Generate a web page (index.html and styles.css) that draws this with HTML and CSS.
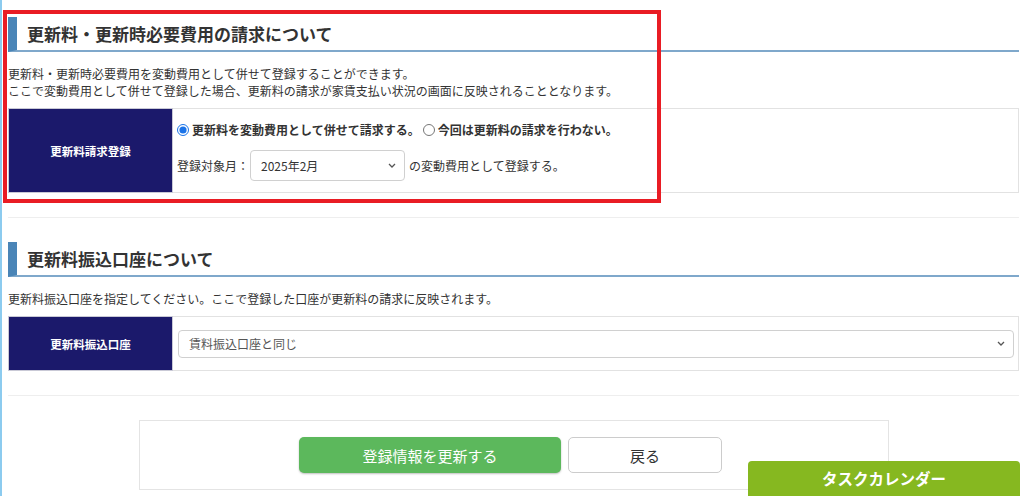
FILE: index.html
```html
<!DOCTYPE html>
<html lang="ja">
<head>
    <meta charset="UTF-8">
    <title>更新料の請求設定</title>
    <link rel="stylesheet" href="styles.css">
</head>
<body>
<div class="page">
    <section class="block">
        <h2 class="sec-title">更新料・更新時必要費用の請求について</h2>
        <p class="sec-desc">
            更新料・更新時必要費用を変動費用として併せて登録することができます。<br>
            ここで変動費用として併せて登録した場合、更新料の請求が家賃支払い状況の画面に反映されることとなります。
        </p>
        <table class="form-table">
            <tr class="row-tall">
                <th>更新料請求登録</th>
                <td>
                    <div class="radio-line">
                        <label class="radio"><input type="radio" name="claim" checked>更新料を変動費用として併せて請求する。</label>
                        <label class="radio"><input type="radio" name="claim">今回は更新料の請求を行わない。</label>
                    </div>
                    <div class="month-line">
                        <span>登録対象月：</span>
                        <select class="sel sel-month">
                            <option>2025年2月</option>
                        </select>
                        <span>の変動費用として登録する。</span>
                    </div>
                </td>
            </tr>
        </table>
    </section>

    <hr class="sep">

    <section class="block">
        <h2 class="sec-title">更新料振込口座について</h2>
        <p class="sec-desc">更新料振込口座を指定してください。ここで登録した口座が更新料の請求に反映されます。</p>
        <table class="form-table">
            <tr class="row-short">
                <th>更新料振込口座</th>
                <td>
                    <select class="sel sel-wide">
                        <option>賃料振込口座と同じ</option>
                    </select>
                </td>
            </tr>
        </table>
    </section>

    <hr class="sep">

    <div class="actions">
        <button type="button" class="btn btn-primary">登録情報を更新する</button>
        <button type="button" class="btn btn-back">戻る</button>
    </div>
</div>

<!-- 注釈の赤枠 -->
<div class="annot"></div>

<a href="#" class="task-tab">タスクカレンダー</a>
</body>
</html>
```

FILE: styles.css
```css
:root {
    --navy: #1b196b;
    --bar-blue: #4a85b7;
    --line-blue: #7fa8cb;
    --border: #e2e2e2;
    --text: #333;
    --green: #5cb85c;
    --lime: #86b820;
}

* {
    margin: 0;
    padding: 0;
    box-sizing: border-box;
}

body {
    font-family: "Noto Sans CJK JP", "Noto Sans", sans-serif;
    color: var(--text);
    background: #fff;
    overflow: hidden;
}

.page {
    border-left: 2px solid #8ccbef;
    min-height: 496px;
    padding: 17px 5px 0 6px;
}

/* 見出し */
.sec-title {
    height: 35px;
    line-height: 33px;
    font-size: 17px;
    font-weight: 700;
    color: #333;
    border-left: 9px solid var(--bar-blue);
    border-bottom: 2px solid var(--line-blue);
    padding-left: 10px;
}

.sec-desc {
    font-size: 12px;
    line-height: 17px;
    margin: 13px 0 9px;
    color: #333;
}

/* フォームテーブル */
.form-table {
    width: 100%;
    border-collapse: collapse;
}

.form-table th {
    width: 164px;
    background: var(--navy);
    color: #fff;
    font-size: 11.5px;
    font-weight: 700;
    text-align: center;
    border: 1px solid #c9c9d6;
}

.form-table td {
    border: 1px solid var(--border);
    font-size: 12px;
    padding: 0 4px;
}

.row-tall {
    height: 84px;
}

.row-short {
    height: 54px;
}

.radio-line {
    display: flex;
    gap: 3px;
    font-weight: 700;
    margin-top: 1px;
}

.radio {
    display: flex;
    align-items: center;
    gap: 2px;
}

.radio input {
    width: 12px;
    height: 12px;
    margin: 0 1px 0 0;
    accent-color: #1a73e8;
}

.month-line {
    display: flex;
    align-items: center;
    gap: 1px;
    margin-top: 12px;
}

.month-line span:last-child {
    margin-left: 3px;
}

.sel {
    appearance: none;
    -webkit-appearance: none;
    font-family: inherit;
    font-size: 12px;
    color: #333;
    background: #fff url("data:image/svg+xml,%3Csvg xmlns='http://www.w3.org/2000/svg' width='8' height='5' viewBox='0 0 8 5'%3E%3Cpath d='M1 1l3 3 3-3' fill='none' stroke='%23555' stroke-width='1.3'/%3E%3C/svg%3E") no-repeat right 8px center;
    border: 1px solid #d0d0d0;
    border-radius: 4px;
    padding: 0 24px 0 10px;
    outline: none;
}

.sel-month {
    width: 155px;
    height: 31px;
}

.sel-wide {
    display: block;
    width: 836px;
    height: 28px;
    margin-left: 1px;
    color: #555;
}

/* 区切り線 */
.sep {
    border: none;
    border-top: 1px solid #eee;
    margin: 24px 0 24px;
}

/* ボタン */
.actions {
    width: 750px;
    height: 70px;
    margin: 0 auto;
    border: 1px solid #e4e4e4;
    display: flex;
    justify-content: center;
    align-items: center;
    gap: 7px;
    padding-right: 6px;
}

.btn {
    height: 36px;
    font-family: inherit;
    font-size: 15px;
    border-radius: 5px;
    cursor: pointer;
}

.btn-primary {
    width: 262px;
    background: var(--green);
    color: #fff;
    border: none;
    box-shadow: 0 1px 2px rgba(0, 0, 0, 0.25);
}

.btn-back {
    width: 154px;
    background: #fff;
    color: #333;
    border: 1px solid #ccc;
}

.annot {
    position: absolute;
    left: 3px;
    top: 10px;
    width: 658px;
    height: 193px;
    border: 4px solid #e91c24;
    pointer-events: none;
}

.task-tab {
    position: fixed;
    left: 748px;
    bottom: -6px;
    width: 272px;
    height: 41px;
    background: var(--lime);
    color: #fff;
    font-size: 15.5px;
    font-weight: 700;
    text-align: center;
    line-height: 35px;
    text-decoration: none;
    border-radius: 4px 4px 0 0;
}
```
